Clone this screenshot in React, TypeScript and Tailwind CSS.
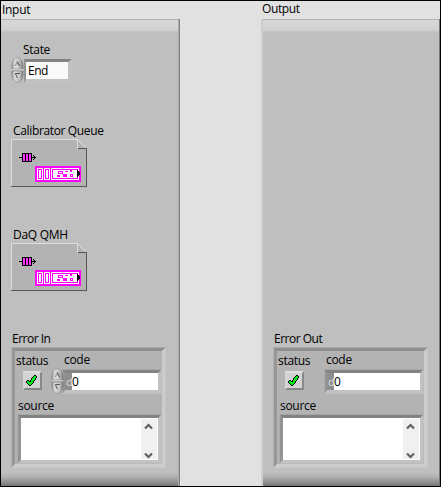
import type { ReactNode } from 'react';

function Label({ children, className = '' }: { children: ReactNode; className?: string }) {
  return <div className={`whitespace-nowrap text-[12px] leading-4 text-black ${className}`}>{children}</div>;
}

function Stepper() {
  return (
    <svg width="13" height="26" viewBox="0 0 13 26" className="block shrink-0">
      <defs>
        <linearGradient id="metal" x1="0" x2="1" y1="0" y2="0">
          <stop offset="0" stopColor="#929292" />
          <stop offset=".25" stopColor="#dadada" />
          <stop offset=".7" stopColor="#bcbcbc" />
          <stop offset="1" stopColor="#777" />
        </linearGradient>
      </defs>
      <path d="M.8 12V8Q1.8 .8 6.5 .6Q11.2 .8 12.2 8V12Z" fill="url(#metal)" stroke="#8c8c8c" strokeWidth=".6" />
      <path d="M.8 14V18Q1.8 25.2 6.5 25.4Q11.2 25.2 12.2 18V14Z" fill="url(#metal)" stroke="#858585" strokeWidth=".6" />
      <path d="M1 12.5H12" stroke="#c9c9c9" />
      <path d="M4 9.5H9" stroke="#ddd" fill="none" />
      <path d="M4 9L6.5 5" stroke="#888" fill="none" />
      <path d="M6.3 4.5L8.8 9.5" stroke="#444" fill="none" />
      <path d="M9 16.5L6.5 21.5" stroke="#ddd" fill="none" />
      <path d="M9 16.5H4.3L6.5 21" stroke="#555" fill="none" />
    </svg>
  );
}

function QueueRef() {
  return (
    <svg width="76" height="48" viewBox="0 0 76 48" shapeRendering="crispEdges" className="ml-[10px] block">
      <path d="M0 0H67L76 9V48H0Z" fill="#b3b3b3" />
      <path d="M66 0H76V9Z" fill="#bfbfbf" />
      <path d="M.5 47V.5H66.5L75 9" fill="none" stroke="#dedede" />
      <path d="M66.5 9.5H75.5V47.5H0" fill="none" stroke="#555" />
      <path d="M66.5 1V9" stroke="#dedede" />
      <path d="M8 18.5H11M21 18.5H24" stroke="#000" />
      <path d="M11 14H21V23H11Z" fill="#000" />
      <path d="M12 15H14V22H12ZM15 15H17V22H15ZM18 15H20V22H18Z" fill="#ff33ff" />
      <path d="M22 16H23V17H24V18H25V19H24V20H23V21H22V20H23V17H22Z" fill="#000" />
      <path d="M24 27H70V43H24Z" fill="#f0f" />
      <path d="M26 29H32V41H26ZM33 29H39V41H33ZM40 29H68V41H40Z" fill="#fff" />
      <path d="M27 30H31V40H27ZM34 30H38V40H34ZM41 30H67V40H41Z" fill="#f0f" />
      <path d="M28 31H30V39H28ZM35 31H37V39H35ZM42 31H66V39H42Z" fill="#fff" />
      <path d="M47 32H52V35H47ZM54 32H57V33H54ZM59 31H61V33H59ZM46 36H49V38H46ZM52 35H56V38H52ZM59 35H62V38H59Z" fill="#f0f" />
      <path d="M48 33H51V34H48ZM60 36H61V37H60Z" fill="#fff" />
      <path d="M66 31H67V32H68V33H69V36H68V37H67V38H66Z" fill="#000" />
    </svg>
  );
}

function StatusLight() {
  return (
    <div className="mt-[2px] ml-[8px] h-[19px] w-[19px] border-2 border-t-[#dedede] border-r-[#898989] border-b-[#858585] border-l-[#d5d5d5] bg-[#d2d2d2]">
      <svg width="15" height="15" viewBox="1 0 15 15" shapeRendering="crispEdges">
        <path d="M10 2H12V3H13V5H12V7H11V8H10V10H9V11H8V12H7V13H5V12H4V11H3V10H2V8H3V7H5V8H6V7H7V5H8V4H9V3H10Z" fill="#000" />
        <path d="M10 3H12V5H11V7H10V8H9V10H8V11H7V12H5V11H4V10H3V8H5V9H7V7H8V5H9V4H10Z" fill="#00ed16" />
      </svg>
    </div>
  );
}

const rim = 'border border-t-[#a6a6a6] border-l-[#acacac] border-r-[#bbb] border-b-[#bbb]';
const inset = 'border-t-[#838383] border-l-[#949494] border-r-[#c2c2c2] border-b-[#c2c2c2]';

function ErrorCluster({ input = false }: { input?: boolean }) {
  return (
    <div className="ml-[10px] h-[121px] w-[155px] border border-t-[#a9a9a9] border-r-[#c6c6c6] border-b-[#c6c6c6] border-l-[#b1b1b1]">
      <div className="flex h-[119px] w-[153px] flex-col border-3 border-t-[#8f8f8f] border-r-[#cccccc] border-b-[#cccccc] border-l-[#979797] bg-[#b3b3b3]">
        <div className="flex h-[43px]">
          <div className="w-[36px] pt-[2px]">
            <Label className="ml-px tracking-[-0.3px]">status</Label>
            <StatusLight />
          </div>
          <div className="w-[11px]">{input && <div className="relative z-10 pt-[17px]"><Stepper /></div>}</div>
          <div className="flex w-[100px] flex-col pt-px">
            <Label className="ml-[2px] tracking-[-0.3px]">code</Label>
            <div className={`mt-px h-[25px] w-[100px] ${rim}`}>
              <div className={`flex h-[23px] border-t-[3px] border-r-[3px] border-b-[3px] border-l-[2px] bg-white ${inset}`}>
                <div className="w-[7px] bg-[#8e8e8e] pl-px text-[11px] leading-[17px] text-[#ddd]">d</div>
                <div className="text-[12px] leading-[17px]">0</div>
              </div>
            </div>
          </div>
        </div>
        <Label className="mt-[4px] ml-[3px] tracking-[-0.3px]">source</Label>
        <div className={`ml-[2px] h-[50px] w-[145px] ${rim}`}>
          <div className={`flex h-[48px] justify-end border-3 bg-white ${inset}`}>
            <div className="mt-px mr-px h-[40px] w-[16px] bg-[#f0f0f0]">
              <svg width="16" height="40" fill="none" stroke="#606060" strokeWidth="2.2">
                <path d="M4 9.5L7.5 6L11 9.5M4 34.5L7.5 38L11 34.5" />
              </svg>
            </div>
          </div>
        </div>
      </div>
    </div>
  );
}

const panelShade = 'bg-[linear-gradient(to_bottom,#b2b2b2_0,#b2b2b2_1px,#d7d7d7_1px,#d2d2d2_11px,#bfbfbf_13px,#bfbfbf_454px,#aaa_459px,#777_467px)]';

export default function App() {
  return (
    <div className="flex h-[487px] w-[441px] overflow-hidden border border-black bg-[#e1e1e1] font-['Open_Sans','Noto_Sans',sans-serif]">
      <section className="w-[179px]">
        <Label className="ml-px h-[18px] pt-px tracking-[-0.3px]">Input</Label>
        <div className={`h-[467px] w-[179px] border-r border-[#818181] ${panelShade}`}>
          <div className="h-[467px] border-r border-[#ababab]">
            <Label className="ml-[22px] h-[38px] pt-[23px] tracking-[-0.3px]">State</Label>
            <div className="ml-[10px] flex h-[26px]">
              <Stepper />
              <div className={`mt-[2px] h-[24px] w-[48px] border-t-[3px] border-r-[4px] border-b-[4px] border-l-[2px] bg-[#fafafa] pl-[2px] text-[12px] leading-[18px] tracking-[-0.5px] ${inset}`}>End</div>
            </div>
            <Label className="mt-[40px] ml-[12px] tracking-[-0.35px]">Calibrator Queue</Label>
            <QueueRef />
            <Label className="mt-[40px] ml-[12px] tracking-[-0.3px]">DaQ QMH</Label>
            <QueueRef />
            <Label className="mt-[40px] ml-[11px] tracking-[-0.5px]">Error In</Label>
            <ErrorCluster input />
          </div>
        </div>
      </section>
      <section className="ml-[81px] w-[179px]">
        <Label className="ml-px h-[18px] tracking-[-0.4px]">Output</Label>
        <div className={`h-[467px] w-[179px] border-r border-[#777] ${panelShade}`}>
          <div className="h-[467px] border-l-2 border-[#cecece] pt-[312px]">
            <Label className="ml-[11px] tracking-[-0.5px]">Error Out</Label>
            <ErrorCluster />
          </div>
        </div>
      </section>
    </div>
  );
}
